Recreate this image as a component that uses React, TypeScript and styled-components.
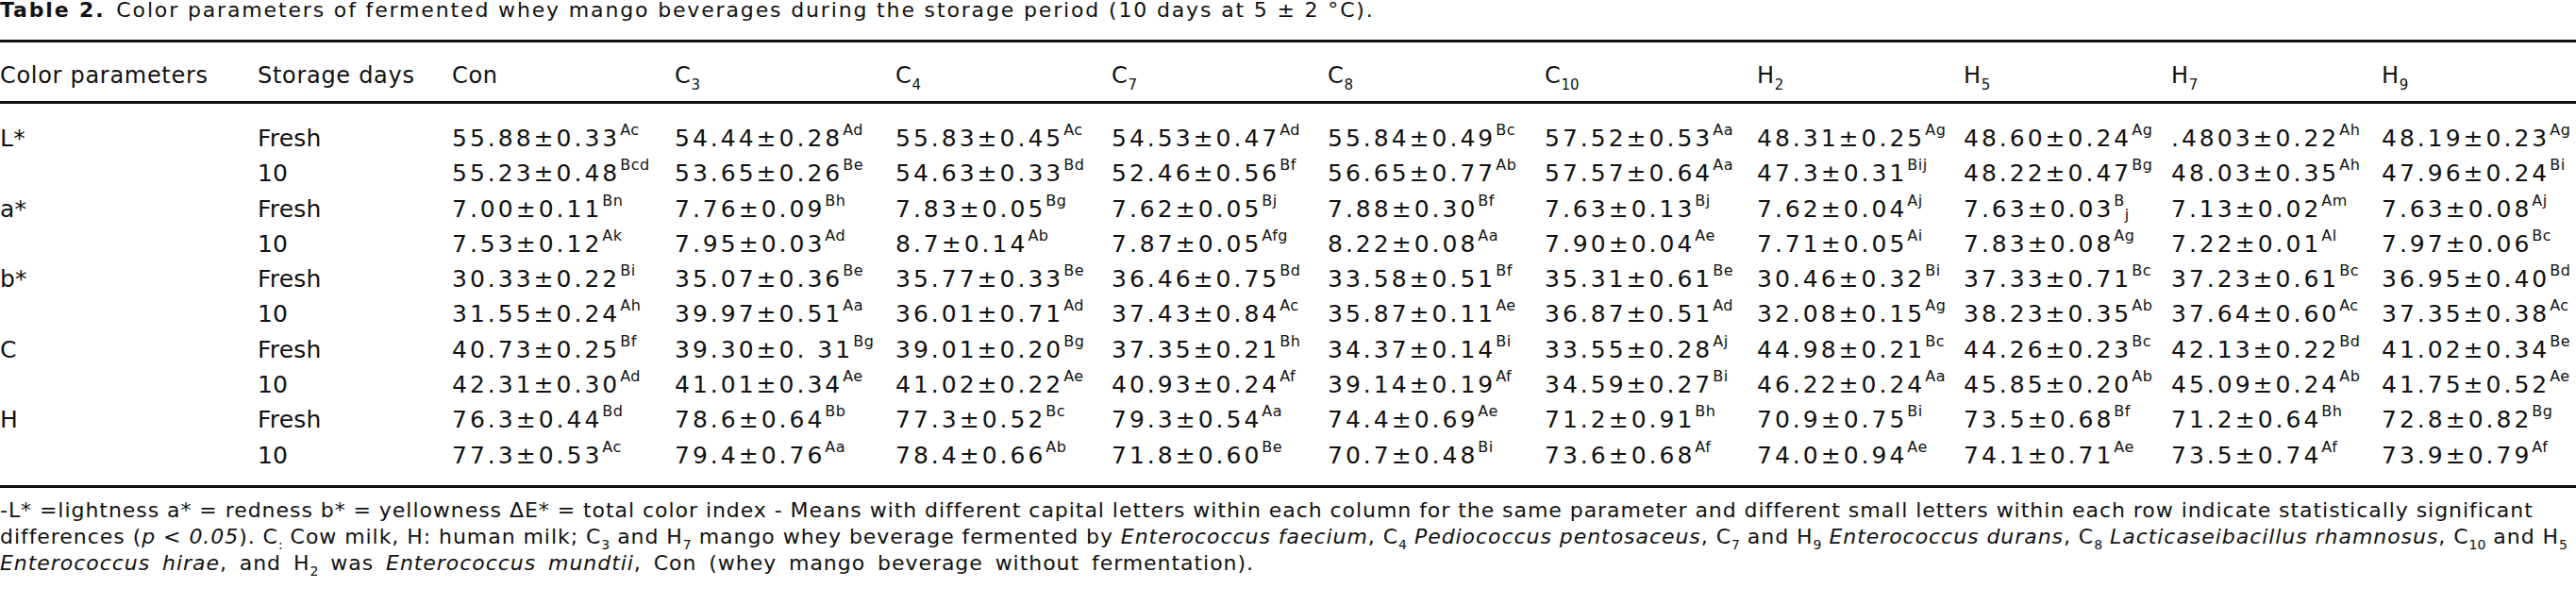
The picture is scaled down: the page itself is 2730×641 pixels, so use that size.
import styled, { createGlobalStyle } from "styled-components"

const GlobalStyle = createGlobalStyle`
    html, body {
        margin: 0;
        padding: 0;
        background: #ffffff;
        overflow: hidden;
    }
    body {
        font-family: "DejaVu Sans", "Liberation Sans", sans-serif;
        color: #111111;
    }
`

const Page = styled.div`
    width: 2730px;
`

const Caption = styled.p`
    margin: 0 0 21px;
    font-size: 22px;
    line-height: 21px;
    letter-spacing: 1.85px;
    white-space: nowrap;
    b {
        font-weight: 700;
        margin-right: 12px;
    }
`

const Table = styled.table`
    width: 2730px;
    table-layout: fixed;
    border-collapse: separate;
    border-spacing: 0;
    border-top: 3px solid #111111;
    border-bottom: 3px solid #111111;
`

const Col = styled.col<{ $w: number }>`
    width: ${p => p.$w}px;
`

const HeadCell = styled.th`
    padding: 21px 0 13px;
    border-bottom: 3px solid #111111;
    text-align: left;
    font-weight: 400;
    font-size: 24px;
    line-height: 28px;
    letter-spacing: 0.7px;
    white-space: nowrap;
`

const Row = styled.tr`
    &:first-child td {
        padding-top: 18px;
    }
    &:last-child td {
        padding-bottom: 13px;
    }
`

const Cell = styled.td<{ $num?: boolean }>`
    padding: 0;
    font-size: 25px;
    line-height: 37.3px;
    letter-spacing: ${p => (p.$num ? 3 : 0.2)}px;
    vertical-align: baseline;
    white-space: nowrap;
`

const Sup = styled.sup`
    font-size: 16px;
    line-height: 0;
    letter-spacing: 0.5px;
    vertical-align: 12px;
`

const Low = styled.span`
    font-size: 16px;
    line-height: 0;
    letter-spacing: 0;
    vertical-align: -3px;
`

const Sub = styled.sub<{ $size?: number; $drop?: number }>`
    font-size: ${p => p.$size ?? 15}px;
    line-height: 0;
    letter-spacing: 0;
    vertical-align: -${p => p.$drop ?? 7}px;
`

const Note = styled.div`
    margin-top: 10px;
    font-size: 22px;
    line-height: 28px;
    letter-spacing: 0.95px;
    white-space: nowrap;
`

const NoteLine = styled.div<{ $loose?: boolean }>`
    word-spacing: ${p => (p.$loose ? 5 : 0)}px;
`

const Species = styled.i`
    font-style: italic;
`

const colWidths = [273, 206, 236, 234, 229, 229, 230, 225, 219, 220, 223, 206]

const heads: [string, string][] = [
    ["Con", ""], ["C", "3"], ["C", "4"], ["C", "7"], ["C", "8"], ["C", "10"],
    ["H", "2"], ["H", "5"], ["H", "7"], ["H", "9"],
]

// mean|sd|letters  ("_" puts the rest of the letters low, as printed)
const rows: { param: string; day: string; values: string[] }[] = [
    { param: "L*", day: "Fresh", values: ["55.88|0.33|Ac", "54.44|0.28|Ad", "55.83|0.45|Ac", "54.53|0.47|Ad", "55.84|0.49|Bc", "57.52|0.53|Aa", "48.31|0.25|Ag", "48.60|0.24|Ag", ".4803|0.22|Ah", "48.19|0.23|Ag"] },
    { param: "", day: "10", values: ["55.23|0.48|Bcd", "53.65|0.26|Be", "54.63|0.33|Bd", "52.46|0.56|Bf", "56.65|0.77|Ab", "57.57|0.64|Aa", "47.3|0.31|Bij", "48.22|0.47|Bg", "48.03|0.35|Ah", "47.96|0.24|Bi"] },
    { param: "a*", day: "Fresh", values: ["7.00|0.11|Bn", "7.76|0.09|Bh", "7.83|0.05|Bg", "7.62|0.05|Bj", "7.88|0.30|Bf", "7.63|0.13|Bj", "7.62|0.04|Aj", "7.63|0.03|B_j", "7.13|0.02|Am", "7.63|0.08|Aj"] },
    { param: "", day: "10", values: ["7.53|0.12|Ak", "7.95|0.03|Ad", "8.7|0.14|Ab", "7.87|0.05|Afg", "8.22|0.08|Aa", "7.90|0.04|Ae", "7.71|0.05|Ai", "7.83|0.08|Ag", "7.22|0.01|Al", "7.97|0.06|Bc"] },
    { param: "b*", day: "Fresh", values: ["30.33|0.22|Bi", "35.07|0.36|Be", "35.77|0.33|Be", "36.46|0.75|Bd", "33.58|0.51|Bf", "35.31|0.61|Be", "30.46|0.32|Bi", "37.33|0.71|Bc", "37.23|0.61|Bc", "36.95|0.40|Bd"] },
    { param: "", day: "10", values: ["31.55|0.24|Ah", "39.97|0.51|Aa", "36.01|0.71|Ad", "37.43|0.84|Ac", "35.87|0.11|Ae", "36.87|0.51|Ad", "32.08|0.15|Ag", "38.23|0.35|Ab", "37.64|0.60|Ac", "37.35|0.38|Ac"] },
    { param: "C", day: "Fresh", values: ["40.73|0.25|Bf", "39.30|0. 31|Bg", "39.01|0.20|Bg", "37.35|0.21|Bh", "34.37|0.14|Bi", "33.55|0.28|Aj", "44.98|0.21|Bc", "44.26|0.23|Bc", "42.13|0.22|Bd", "41.02|0.34|Be"] },
    { param: "", day: "10", values: ["42.31|0.30|Ad", "41.01|0.34|Ae", "41.02|0.22|Ae", "40.93|0.24|Af", "39.14|0.19|Af", "34.59|0.27|Bi", "46.22|0.24|Aa", "45.85|0.20|Ab", "45.09|0.24|Ab", "41.75|0.52|Ae"] },
    { param: "H", day: "Fresh", values: ["76.3|0.44|Bd", "78.6|0.64|Bb", "77.3|0.52|Bc", "79.3|0.54|Aa", "74.4|0.69|Ae", "71.2|0.91|Bh", "70.9|0.75|Bi", "73.5|0.68|Bf", "71.2|0.64|Bh", "72.8|0.82|Bg"] },
    { param: "", day: "10", values: ["77.3|0.53|Ac", "79.4|0.76|Aa", "78.4|0.66|Ab", "71.8|0.60|Be", "70.7|0.48|Bi", "73.6|0.68|Af", "74.0|0.94|Ae", "74.1|0.71|Ae", "73.5|0.74|Af", "73.9|0.79|Af"] },
]

const Value = ({ raw }: { raw: string }) => {
    const [mean, sd, letters] = raw.split("|")
    const [up, low] = letters.split("_")
    return (
        <>
            {mean}±{sd}
            <Sup>{up}</Sup>
            {low && <Low>{low}</Low>}
        </>
    )
}

const NoteSub = ({ children }: { children: string }) => <Sub $size={14} $drop={6}>{children}</Sub>

export default function App() {
    return (
        <Page>
            <GlobalStyle />
            <Caption>
                <b>Table 2.</b>Color parameters of fermented whey mango beverages during the storage period (10 days at 5 ± 2 °C).
            </Caption>
            <Table>
                <colgroup>
                    {colWidths.map((w, i) => <Col key={i} $w={w} />)}
                </colgroup>
                <thead>
                    <tr>
                        <HeadCell>Color parameters</HeadCell>
                        <HeadCell>Storage days</HeadCell>
                        {heads.map(([name, idx]) => (
                            <HeadCell key={name + idx}>
                                {name}{idx && <Sub>{idx}</Sub>}
                            </HeadCell>
                        ))}
                    </tr>
                </thead>
                <tbody>
                    {rows.map((r, i) => (
                        <Row key={i}>
                            <Cell>{r.param}</Cell>
                            <Cell>{r.day}</Cell>
                            {r.values.map((v, j) => (
                                <Cell key={j} $num><Value raw={v} /></Cell>
                            ))}
                        </Row>
                    ))}
                </tbody>
            </Table>
            <Note>
                <NoteLine>
                    -L* =lightness a* = redness b* = yellowness ΔE* = total color index - Means with different capital letters within each column for the same parameter and different small letters within each row indicate statistically significant
                </NoteLine>
                <NoteLine>
                    differences (<Species>p</Species> &lt; <Species>0.05</Species>). C<NoteSub>:</NoteSub> Cow milk, H: human milk; C<NoteSub>3</NoteSub> and H<NoteSub>7</NoteSub> mango whey beverage fermented by <Species>Enterococcus faecium</Species>, C<NoteSub>4</NoteSub> <Species>Pediococcus pentosaceus</Species>, C<NoteSub>7</NoteSub> and H<NoteSub>9</NoteSub> <Species>Enterococcus durans</Species>, C<NoteSub>8</NoteSub> <Species>Lacticaseibacillus rhamnosus</Species>, C<NoteSub>10</NoteSub> and H<NoteSub>5</NoteSub>
                </NoteLine>
                <NoteLine $loose>
                    <Species>Enterococcus hirae</Species>, and H<NoteSub>2</NoteSub> was <Species>Enterococcus mundtii</Species>, Con (whey mango beverage without fermentation).
                </NoteLine>
            </Note>
        </Page>
    )
}
